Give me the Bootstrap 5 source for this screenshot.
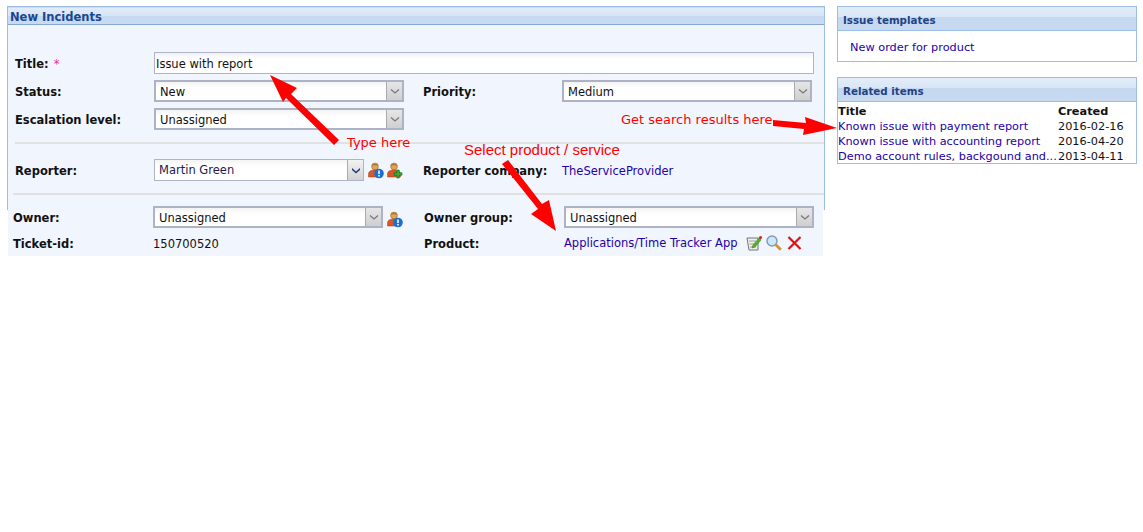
<!DOCTYPE html>
<html lang="en"><head><meta charset="utf-8"><title>New Incidents</title>
<link href="https://cdn.jsdelivr.net/npm/bootstrap@5.3.0/dist/css/bootstrap.min.css" rel="stylesheet">
<style>
html,body{margin:0;background:#fff}
body{font:11.5px/14px "DejaVu Sans",sans-serif;color:#111;height:532px;overflow:hidden;position:relative}
.shell{padding:6px 6px 0 7px;gap:12px}
.leftcol{width:818px;flex:none}
.rightcol{width:300px;flex:none;margin-left:0;padding-top:0}
.panelbox{border:1px solid #9dbde8;border-bottom:0;background:#f1f5fd;height:204px;border-right-width:1px}
.headbar{height:18px;background:linear-gradient(#e2ecf8 0,#d6e4f5 50%,#c6d9f0 50%,#c9dbf1 100%);border-top:1px solid #c9dcf3;border-bottom:1px solid #84a6d4;color:#1b4592;font-weight:700;padding:0 2px;line-height:18px}
.rowline{display:flex;align-items:center}
.lab{font-weight:700;color:#111;flex:none;padding-top:2px}
.w1{width:139px;margin-left:7px}
.w2{width:139px;margin-left:19px}
.req{color:#f0309a;font-weight:400;margin-left:1px}
.titlebox{width:660px;height:22px;border:1px solid #adb4cb;padding:0 1px;line-height:22px;background:linear-gradient(#f1f1f1,#fff 6px);color:#111}
.combo{display:flex;height:22px;border:2px solid #adb2c5;background:linear-gradient(#f3f3f3,#fff 6px);width:250px;flex:none}
.combo .val{flex:1;padding-left:4px;line-height:21px}
.combo.thin{border-width:1px;width:210px;border-color:#adb4cb}
.thin .val{line-height:20px}
.arrowbtn{width:16px;border-left:1px solid #aaa;background:linear-gradient(#e6e6e6,#cfcfcf);display:flex;align-items:center;justify-content:center}
.thin .arrowbtn{width:16px;background:linear-gradient(#f2f2f2,#d2d2d2)}
.lnk{color:#2300a8;text-decoration:none}
.sep{height:2px;background:#e1e1e1;margin-left:7px}
.lower{background:#f1f5fd;width:815px;margin-left:1px;height:46px;margin-top:0}
.sidebox{border:1px solid #9dbde8;background:#fff;font-size:11.3px}
.sidehead{height:24px;background:linear-gradient(#e3edf9 0,#d9e6f6 45%,#c4d8f0 45%,#c8daf1 100%);border-bottom:1px solid #9dbde8;color:#1f4383;font-weight:700;font-size:10.3px;padding-left:5px;line-height:26px}
.gridrel{display:grid;grid-template-columns:220px 1fr;line-height:15px;padding-top:2px}
.gridrel>*{white-space:nowrap}
.note{position:absolute;color:#f00;white-space:nowrap;line-height:16px;font-size:13px}
.overlay{position:absolute;left:0;top:0;pointer-events:none}
.mi{display:inline-block;vertical-align:top;flex:none}
</style></head>
<body>
<svg width="0" height="0" style="position:absolute"><defs>
<g id="person"><circle cx="8" cy="4.5" r="3.4" fill="#e0a458" stroke="#9a6a2c" stroke-width=".6"/><path d="M4.8 4.2C5 1 11 1 11.2 4.2 9.5 3 6.5 3 4.8 4.2z" fill="#b5772e"/><path d="M1.5 15v-3.2C1.8 9 4.4 8 8 8c3.4 0 6 1 6.5 3.8V15z" fill="#d9582a" stroke="#a23c18" stroke-width=".5"/></g>
<g id="chev"><path d="M2 1.5l4 3.5 4-3.5" fill="none" stroke="#777" stroke-width="1.2"/></g>
</defs></svg>
<div class="shell d-flex align-items-start">
<div class="leftcol">
 <div class="panelbox">
  <div class="headbar">New Incidents</div>
  <div class="rowline" style="margin-top:27px"><span class="lab w1">Title: <span class="req">*</span></span><div class="titlebox">Issue with report</div></div>
  <div class="rowline" style="margin-top:6px"><span class="lab w1">Status:</span><div class="combo"><span class="val">New</span><span class="arrowbtn"><svg width="12" height="7"><use href="#chev"/></svg></span></div><span class="lab w2">Priority:</span><div class="combo"><span class="val">Medium</span><span class="arrowbtn"><svg width="12" height="7"><use href="#chev"/></svg></span></div></div>
  <div class="rowline" style="margin-top:6px"><span class="lab w1">Escalation level:</span><div class="combo"><span class="val">Unassigned</span><span class="arrowbtn"><svg width="12" height="7"><use href="#chev"/></svg></span></div></div>
  <div class="sep" style="margin-top:12px;margin-left:7px"></div>
  <div class="rowline" style="margin-top:15px"><span class="lab w1">Reporter:</span><div class="combo thin"><span class="val" style="color:#1c1c4c">Martin Green</span><span class="arrowbtn"><svg width="12" height="7"><path d="M2 1l4 3.5L10 1v2L6 6.5 2 3z" fill="#1f3f78"/></svg></span></div>
   <svg class="mi" width="17" height="17" style="margin-left:3px"><use href="#person"/><circle cx="12" cy="11.5" r="4.8" fill="#1c6fd0"/><rect x="11.2" y="8.5" width="1.6" height="3.6" fill="#fff"/><rect x="11.2" y="13" width="1.6" height="1.5" fill="#fff"/></svg>
   <svg class="mi" width="17" height="17" style="margin-left:2px"><use href="#person"/><path d="M10.8 8h2.4v2.8H16v2.4h-2.8V16h-2.4v-2.8H8v-2.4h2.8z" fill="#35b035" stroke="#0f6a12" stroke-width=".6"/></svg>
   <span class="lab" style="margin-left:20px;width:139px">Reporter company:</span><a class="lnk" style="padding-top:2px" href="#">TheServiceProvider</a></div>
  <div class="sep" style="margin-top:12px;margin-left:5px"></div>
 </div>
 <div class="lower">
  <div class="rowline"><span class="lab" style="width:140px;margin-left:5px;margin-top:-4px">Owner:</span><div class="combo" style="width:230px;margin-top:-4px"><span class="val">Unassigned</span><span class="arrowbtn"><svg width="12" height="7"><use href="#chev"/></svg></span></div>
   <svg class="mi" width="17" height="17" style="margin-left:3px"><use href="#person"/><circle cx="12" cy="11.5" r="4.8" fill="#1c6fd0"/><rect x="11.2" y="8.5" width="1.6" height="3.6" fill="#fff"/><rect x="11.2" y="13" width="1.6" height="1.5" fill="#fff"/></svg>
   <span class="lab" style="margin-left:21px;width:140px;margin-top:-4px">Owner group:</span><div class="combo" style="margin-top:-4px"><span class="val">Unassigned</span><span class="arrowbtn"><svg width="12" height="7"><use href="#chev"/></svg></span></div></div>
  <div class="rowline" style="margin-top:7px"><span class="lab" style="width:140px;margin-left:5px">Ticket-id:</span><span style="width:271px;padding-top:2px">150700520</span><span class="lab" style="width:140px">Product:</span><a class="lnk" href="#">Applications/Time Tracker App</a>
   <svg class="mi" width="17" height="16" style="margin-left:8px"><path d="M1 3h11v12H3z" fill="#f3efe2" stroke="#6e7580"/><path d="M3 6h7M3.5 9h6M4 12h6" stroke="#9aa2ae"/><path d="M7 10l6-7 2 2-6 7-3 1z" fill="#58b030" stroke="#2f7d18" stroke-width=".5"/><circle cx="14.5" cy="2.5" r="1.6" fill="#d22"/></svg>
   <svg class="mi" width="16" height="16" style="margin-left:3px"><circle cx="6" cy="6" r="5" fill="#cfe6f7" stroke="#7a9cb8" stroke-width="1.4"/><path d="M9.8 9.8l5 5" stroke="#d89434" stroke-width="2.8"/></svg>
   <svg class="mi" width="16" height="16" style="margin-left:5px"><path d="M1.5 2l12 12M13.5 2L1.5 14" stroke="#e01010" stroke-width="2.2"/></svg></div>
 </div>
</div>
<div class="rightcol">
 <div class="sidebox" style="height:56px"><div class="sidehead">Issue templates</div><a class="lnk d-block" href="#" style="padding:10px 0 0 12px">New order for product</a></div>
 <div class="sidebox" style="height:87px;margin-top:15px"><div class="sidehead">Related items</div>
  <div class="gridrel"><b>Title</b><b>Created</b>
   <a class="lnk" href="#">Known issue with payment report</a><span>2016-02-16</span>
   <a class="lnk" href="#">Known issue with accounting report</a><span>2016-04-20</span>
   <a class="lnk" href="#">Demo account rules, backgound and...</a><span>2013-04-11</span></div></div>
</div>
</div>
<svg class="overlay" width="1143" height="532" aria-hidden="true">
 <path d="M270 75L297 88 291 94 339 140 334 145 286 98 283 102z" fill="#f00"/>
 <path d="M502 164L508 160 542 204 549 200 556 231 531 214 538 209z" fill="#f00"/>
 <path d="M773 120L806 123 805 117 837 128 803 135 804 129 773 126z" fill="#f00"/>
</svg>
<span class="note" style="left:347px;top:135px">Type here</span>
<span class="note" style="left:464px;top:142px;font-family:'Liberation Sans',sans-serif;font-size:15px">Select product / service</span>
<span class="note" style="left:621px;top:112px">Get search results here</span>
<script src="https://cdn.jsdelivr.net/npm/bootstrap@5.3.0/dist/js/bootstrap.bundle.min.js"></script>
</body></html>
